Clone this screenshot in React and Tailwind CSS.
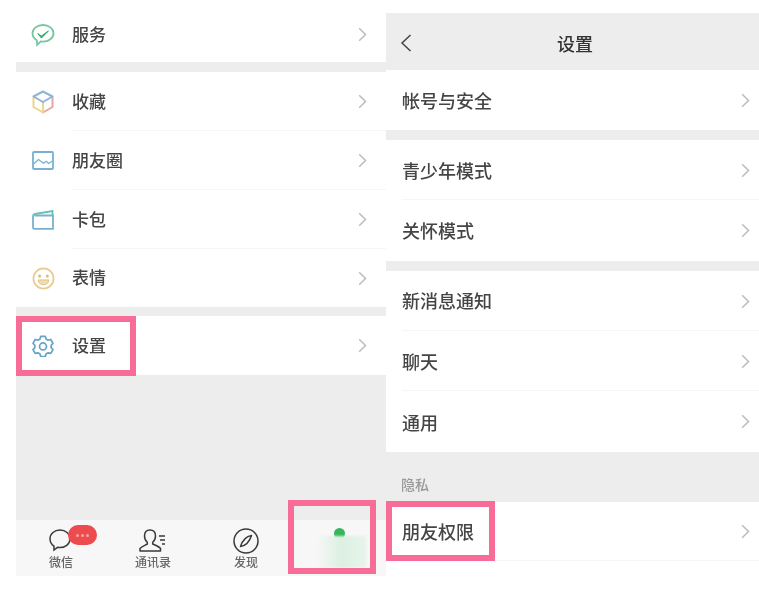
import React from 'react';

const cjk = 'font-["Liberation_Sans","Noto_Sans_CJK_SC",sans-serif]';

function Chevron() {
  return (
    <svg width="9" height="15" viewBox="0 0 9 15" fill="none" stroke="#bcbcbc" strokeWidth="1.500" className="shrink-0">
      <path d="M1.200 1.200 7.500 7.500 1.200 13.800" />
    </svg>
  );
}

const ServiceIcon = () => (
  <svg width="24" height="24" viewBox="0 0 24 24" fill="none">
    <path d="M12 2C17.800 2 22.500 5.600 22.500 10.300S17.800 18.600 12 18.600c-.8 0-1.500-.1-2.200-.2L6.200 21.800l-.4-4.600C3.200 15.700 1.500 13.200 1.500 10.300 1.500 5.600 6.200 2 12 2Z" stroke="#74c79f" strokeWidth="1.800" />
    <path d="m6.800 10.600 3.400 2.600 7.200-5.200-7 7L6.800 10.600Z" fill="#2fa865" stroke="#2fa865" strokeWidth="1" strokeLinejoin="round" />
  </svg>
);

const BoxIcon = () => (
  <svg width="22" height="24" viewBox="0 0 22 24" fill="none" strokeWidth="2" strokeLinejoin="round">
    <path d="M20.500 6.500V17L11 22.500V12" stroke="#e5a8a0" />
    <path d="M1.500 6.500V17L11 22.500V12" stroke="#ecd68a" />
    <path d="M1.500 6.500 11 1.500l9.500 5L11 12 1.500 6.500Z" stroke="#8fb5d2" />
  </svg>
);

const PhotoIcon = () => (
  <svg width="22" height="19" viewBox="0 0 22 19" fill="none" stroke="#78b0d2" strokeWidth="1.800">
    <rect x="1" y="1" width="20" height="17" rx="1" />
    <path d="M1.500 13 6.500 8.500l5 3.800 2.800-2 2.200 2.200 4-2.500" strokeWidth="1.300" />
  </svg>
);

const CardIcon = () => (
  <svg width="22" height="20" viewBox="0 0 22 20" fill="none" strokeWidth="1.800">
    <path d="M1 6v11.500c0 .8.500 1.300 1.300 1.300H21V5.500H2.500" stroke="#78b0d2" />
    <path d="M1 6c0-1.200.7-1.800 1.800-2L20.500 1v4.500" stroke="#63c2b4" />
  </svg>
);

const SmileIcon = () => (
  <svg width="23" height="23" viewBox="0 0 24 24" fill="none">
    <circle cx="12" cy="12" r="10.500" stroke="#e8cb94" strokeWidth="1.800" />
    <circle cx="8" cy="9.500" r="1.600" fill="#e0bd7c" />
    <circle cx="16" cy="9.500" r="1.600" fill="#e0bd7c" />
    <path d="M6.500 13.500h11c0 3-2.500 5-5.500 5s-5.500-2-5.500-5Z" fill="#f2dcb4" stroke="#e0bd7c" strokeWidth="1" />
  </svg>
);

const GearIcon = () => (
  <svg width="22" height="22" viewBox="0 0 24 24" fill="none" stroke="#69a3c6" strokeWidth="1.900" strokeLinejoin="round">
    <path d="M9.500 1.500h5l.8 2.800 2.300 1.300 2.900-.7 2.400 4.200-2 2.100v2.600l2 2.100-2.400 4.200-2.900-.7-2.300 1.300-.8 2.800h-5l-.8-2.800-2.300-1.300-2.900.7L1.100 15.900l2-2.100v-2.600l-2-2.100 2.400-4.200 2.900.7 2.300-1.300.8-2.800Z" />
    <circle cx="12" cy="12.500" r="3.800" />
  </svg>
);

function LeftRow({ icon, label, divider, h, pad = '' }) {
  return (
    <div className={`${h} ${pad} bg-white flex items-center pl-[15px] pr-[19px] relative`}>
      <div className="w-6 flex justify-center shrink-0">{icon}</div>
      <span className="ml-[17px] pt-[2px] text-[17px] text-[#454545] flex-1 font-medium">{label}</span>
      <Chevron />
      {divider && <div className="absolute left-[56px] right-0 bottom-0 h-px bg-[#f6f6f6]" />}
    </div>
  );
}

function RightRow({ label, divider, h, pad = 'pt-1' }) {
  return (
    <div className={`${h} bg-white flex items-center pl-4 pr-[9px] relative`}>
      <span className={`${pad} text-[18px] text-[#454545] flex-1 font-medium`}>{label}</span>
      <Chevron />
      {divider && <div className="absolute left-4 right-0 bottom-0 h-px bg-[#f6f6f6]" />}
    </div>
  );
}

function Tab({ icon, label, w }) {
  return (
    <div className={`${w} flex flex-col items-center pt-2`}>
      <div className="h-[26px] flex items-center justify-center">{icon}</div>
      <span className="text-[12px] leading-[16px] mt-[1px] text-[#666] font-medium">{label}</span>
    </div>
  );
}

export default function App() {
  return (
    <div className={`w-[759px] h-[591px] bg-white flex overflow-hidden blur-[0.6px] ${cjk}`}>
      {/* left phone */}
      <div className="ml-4 w-[370px] h-[576px] flex flex-col bg-[#ededed]">
        <LeftRow h="h-[62px]" pad="pt-[7px]" icon={<ServiceIcon />} label="服务" />
        <div className="h-[10px]" />
        <LeftRow h="h-[59px]" icon={<BoxIcon />} label="收藏" divider />
        <LeftRow h="h-[59px]" icon={<PhotoIcon />} label="朋友圈" divider />
        <LeftRow h="h-[59px]" icon={<CardIcon />} label="卡包" divider />
        <LeftRow h="h-[58px]" icon={<SmileIcon />} label="表情" />
        <div className="h-[9px]" />
        <div className="relative">
          <LeftRow h="h-[59px]" icon={<GearIcon />} label="设置" />
          <div className="absolute left-0 top-0 w-[120px] h-[60px] border-[6px] border-[#f76d97]" />
        </div>
        <div className="flex-1" />
        <div className="h-[56px] bg-[#f7f7f7] flex relative">
          <div className="w-[90px] flex flex-col items-center pt-2 relative">
            <div className="h-[26px] w-full">
              <svg width="24" height="24" viewBox="0 0 24 24" fill="none" stroke="#3a3a3a" strokeWidth="1.500" className="ml-[32px]">
                <path d="M12 2c5.500 0 10 3.700 10 8.800s-4.500 8.800-10 8.800c-.9 0-1.700-.1-2.500-.3L6 22v-3.900C3.500 16.500 2 13.900 2 10.800 2 5.700 6.500 2 12 2Z" />
              </svg>
            </div>
            <div className="absolute left-[52px] top-[5px] w-[29px] h-[20px] rounded-full bg-[#ee4b4f] flex items-center justify-center gap-[2px]">
              <span className="w-[3px] h-[3px] rounded-full bg-[#f4a5a7]" />
              <span className="w-[3px] h-[3px] rounded-full bg-[#f4a5a7]" />
              <span className="w-[3px] h-[3px] rounded-full bg-[#f4a5a7]" />
            </div>
            <span className="text-[12px] leading-[16px] mt-[1px] text-[#666] font-medium">微信</span>
          </div>
          <Tab
            w="w-[94px]"
            label="通讯录"
            icon={
              <svg width="30" height="26" viewBox="0 0 30 26" fill="none" stroke="#3a3a3a" strokeWidth="1.500" strokeLinejoin="round">
                <path d="M12 2c3.500 0 5.500 2.500 5.500 6 0 3-1.300 5-2.800 6.300v1.700c2.800 1.300 6.300 2.500 7.800 4.500v2.500H2V20.500c1.500-2 5-3.200 7.300-4.500v-1.700C7.800 13 6.500 11 6.500 8c0-3.500 2-6 5.500-6Z" />
                <path d="M21 8h6M22 12h5M24 16h3" />
              </svg>
            }
          />
          <Tab
            w="w-[92px]"
            label="发现"
            icon={
              <svg width="26" height="26" viewBox="0 0 26 26" fill="none" stroke="#3a3a3a" strokeWidth="1.500">
                <circle cx="13" cy="13" r="12" />
                <path d="M18.500 7.500c-5 .8-9 4.700-11 11 5-.8 9-4.700 11-11Z" strokeLinejoin="round" />
              </svg>
            }
          />
          {/* blurred-out "me" tab */}
          <div className="absolute left-[297px] top-[8px] w-[53px] h-[40px]">
            <div className="absolute top-0 left-[21px] w-[11px] h-[11px] rounded-full bg-[#35b65a]" />
            <div className="absolute top-[8px] left-[4px] right-0 bottom-0 bg-gradient-to-r from-[#f7f7f7] via-[#dcf0e1] to-[#e8f4eb] blur-[1px]" />
          </div>
          <div className="absolute left-[272px] top-[-20px] w-[88px] h-[74px] border-[6px] border-[#f76d97]" />
        </div>
      </div>

      {/* right phone */}
      <div className="w-[373px] pt-[13px] flex flex-col">
        <div className="h-[57px] bg-[#ededed] flex items-center relative">
          <svg width="12" height="20" viewBox="0 0 12 20" fill="none" stroke="#444" strokeWidth="1.500" className="ml-[14px] mt-[3px]">
            <path d="M10.500 2 2 10l8.500 8" />
          </svg>
          <span className="absolute left-[171px] top-[20px] text-[18px] leading-[24px] text-[#333] font-medium">设置</span>
        </div>
        <RightRow h="h-[60px]" label="帐号与安全" />
        <div className="h-[10px] bg-[#ededed]" />
        <RightRow h="h-[60px]" label="青少年模式" divider />
        <RightRow h="h-[61px]" label="关怀模式" />
        <div className="h-[10px] bg-[#ededed]" />
        <RightRow h="h-[60px]" pad="pt-[2px]" label="新消息通知" divider />
        <RightRow h="h-[60px]" label="聊天" divider />
        <RightRow h="h-[61px]" pad="pt-[6px]" label="通用" />
        <div className="h-[50px] bg-[#ededed] flex items-end pl-[15px] pb-[9px]">
          <span className="text-[14px] leading-[16px] text-[#999] font-medium">隐私</span>
        </div>
        <div className="relative">
          <RightRow h="h-[59px]" label="朋友权限" divider />
          <div className="absolute left-0 top-[-1px] w-[109px] h-[60px] border-[6px] border-[#f76d97]" />
        </div>
      </div>
    </div>
  );
}
